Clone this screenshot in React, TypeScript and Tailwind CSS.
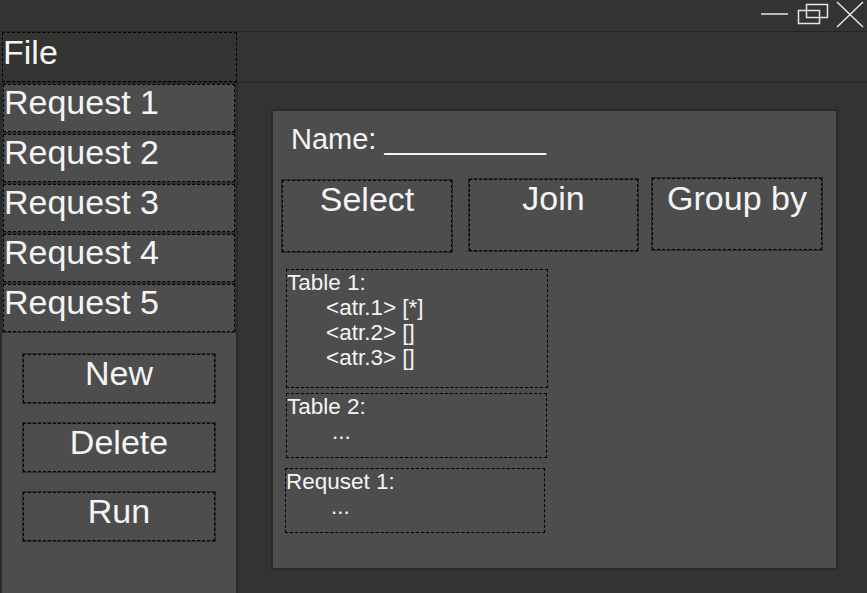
import React from 'react'

const requests = ['Request 1', 'Request 2', 'Request 3', 'Request 4', 'Request 5']
const actions = ['New', 'Delete', 'Run']

// window buttons in the title bar
const WindowControls: React.FC = () => (
  <svg width="112" height="31" viewBox="0 0 112 31" fill="none" stroke="#e6e6e6" strokeWidth="1.5">
    <line x1="6" y1="14" x2="33" y2="14" />
    <rect x="51.5" y="4.5" width="21" height="13" />
    <rect x="43.5" y="10.5" width="21" height="13" />
    <line x1="82" y1="2" x2="108" y2="27" />
    <line x1="108" y1="2" x2="82" y2="27" />
  </svg>
)

const App: React.FC = () => {
  return (
    <div className="w-[867px] h-[593px] bg-[#333331] flex flex-col text-[#f4f4f4] font-['Liberation_Sans',Arial,sans-serif] overflow-hidden">
      {/* title bar */}
      <div className="h-[32px] border-b border-[#242424] flex justify-end">
        <WindowControls />
      </div>

      {/* menu row */}
      <div className="h-[51px] border-b border-[#242424] flex">
        <div className="w-[235px] ml-[2px] border border-dashed border-black text-[34px] leading-none pt-[2px]">
          File
        </div>
      </div>

      <div className="flex flex-1 min-h-0">
        {/* sidebar */}
        <div className="w-[238px] bg-[#4d4d4d] border-l-2 border-r-2 border-[#2c2c2c] flex flex-col">
          {requests.map((r) => (
            <div key={r} className="h-[50px] border border-[#2e2e2e]">
              <div className="h-full border border-dashed border-black text-[34px] leading-none">
                {r}
              </div>
            </div>
          ))}
          <div className="flex flex-col items-center gap-[18px] pt-[20px]">
            {actions.map((a) => (
              <div key={a} className="w-[194px] h-[51px] border border-[#2e2e2e]">
                <div className="h-full border border-dashed border-black text-[34px] leading-[37px] text-center">
                  {a}
                </div>
              </div>
            ))}
          </div>
        </div>

        {/* main area */}
        <div className="flex-1 flex pt-[26px] pl-[33px] pr-[29px] pb-[23px]">
          <div className="flex-1 bg-[#4d4d4d] border-2 border-[#2a2a2a] flex flex-col">
            <div className="pl-[18px] pt-[12px] text-[29px] leading-[32px] whitespace-pre">
              Name: __________
            </div>

            <div className="flex items-start ml-[8px] mt-[22px]">
              <div className="w-[172px] h-[74px] mt-[2px] border border-[#2e2e2e]">
                <div className="h-full border border-dashed border-black text-[34px] leading-[37px] text-center">
                  Select
                </div>
              </div>
              <div className="w-[171px] h-[74px] mt-[1px] ml-[15px] border border-[#2e2e2e]">
                <div className="h-full border border-dashed border-black text-[34px] leading-[37px] text-center">
                  Join
                </div>
              </div>
              <div className="w-[172px] h-[74px] ml-[12px] border border-[#2e2e2e]">
                <div className="h-full border border-dashed border-black text-[34px] leading-[38px] text-center">
                  Group by
                </div>
              </div>
            </div>

            {/* schema boxes */}
            <div className="flex flex-col ml-[13px] mt-[16px] text-[22.5px] leading-[25px]">
              <div className="w-[262px] h-[119px] border border-dashed border-black">
                <div>Table 1:</div>
                <div className="pl-[39px]">&lt;atr.1&gt; [*]</div>
                <div className="pl-[39px]">&lt;atr.2&gt; []</div>
                <div className="pl-[39px]">&lt;atr.3&gt; []</div>
              </div>
              <div className="w-[261px] h-[65px] mt-[5px] border border-dashed border-black">
                <div>Table 2:</div>
                <div className="pl-[45px]">...</div>
              </div>
              <div className="w-[260px] h-[65px] mt-[10px] -ml-px border border-dashed border-black">
                <div>Requset 1:</div>
                <div className="pl-[45px]">...</div>
              </div>
            </div>
          </div>
        </div>
      </div>
    </div>
  )
}

export default App
